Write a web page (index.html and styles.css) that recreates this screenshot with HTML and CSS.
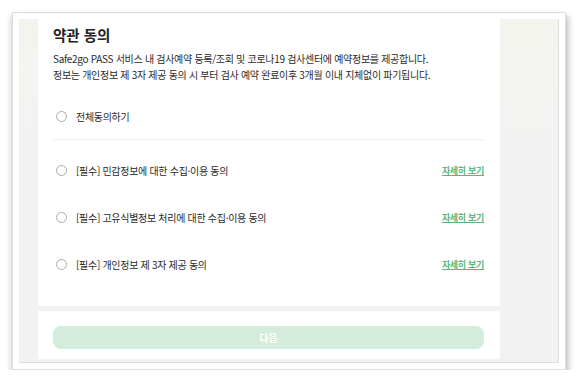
FILE: index.html
```html
<!DOCTYPE html>
<html lang="ko">
<head>
    <meta charset="UTF-8">
    <meta name="viewport" content="width=device-width, initial-scale=1.0">
    <title>약관 동의</title>
    <link rel="stylesheet" href="styles.css">
</head>
<body>
    <div class="frame">
        <div class="shot">
            <div class="side side-left"></div>
            <div class="main">
                <div class="panel">
                    <h1>약관 동의</h1>
                    <p class="desc">Safe2go PASS 서비스 내 검사예약 등록/조회 및 코로나19 검사센터에 예약정보를 제공합니다.<br>정보는 개인정보 제 3자 제공 동의 시 부터 검사 예약 완료이후 3개월 이내 지체없이 파기됩니다.</p>

                    <div class="row row-all">
                        <label class="check"><span class="radio"></span>전체동의하기</label>
                    </div>

                    <div class="row">
                        <label class="check"><span class="radio"></span>[필수] 민감정보에 대한 수집·이용 동의</label>
                        <a href="#" class="more">자세히 보기</a>
                    </div>
                    <div class="row">
                        <label class="check"><span class="radio"></span>[필수] 고유식별정보 처리에 대한 수집·이용 동의</label>
                        <a href="#" class="more">자세히 보기</a>
                    </div>
                    <div class="row">
                        <label class="check"><span class="radio"></span>[필수] 개인정보 제 3자 제공 동의</label>
                        <a href="#" class="more">자세히 보기</a>
                    </div>
                </div>
                <div class="footer">
                    <button class="next" disabled>다음</button>
                </div>
            </div>
            <div class="side side-right"></div>
        </div>
    </div>
</body>
</html>
```

FILE: styles.css
```css
body {
    margin: 0;
    background-color: #fff;
    font-family: "Noto Sans CJK KR", "Noto Sans", sans-serif;
    color: #333;
}
.frame {
    margin: 12px 0 0 12px;
    width: 554px;
    height: 358px;
    box-sizing: border-box;
    padding: 6px;
    background-color: #fff;
    border: 1px solid #dcdcdc;
    box-shadow: 3px 4px 6px rgba(0, 0, 0, 0.22), -2px 3px 5px rgba(0, 0, 0, 0.12);
}
.shot {
    display: flex;
    height: 344px;
    background-color: #f2f2f2;
    border-right: 1px solid #dedede;
    border-bottom: 1px solid #dedede;
    box-sizing: border-box;
}
.side {
    background: linear-gradient(#f4f4ee, #f2f2f2 40%);
}
.side-left {
    width: 19px;
}
.side-right {
    flex: 1;
}
.main {
    width: 462px;
    display: flex;
    flex-direction: column;
}
.panel {
    background-color: #fff;
    height: 287px;
    padding: 0 16px 0 15px;
    box-sizing: border-box;
}
h1 {
    margin: 0;
    padding-top: 6px;
    font-size: 14.5px;
    line-height: 20px;
    font-weight: bold;
    color: #222;
}
.desc {
    margin: 6px 0 0 0;
    font-size: 10px;
    letter-spacing: -0.3px;
    line-height: 16px;
    color: #2a2a2a;
}
.row {
    display: flex;
    justify-content: space-between;
    align-items: center;
    height: 47px;
}
.row-all {
    margin-top: 10px;
    height: 46px;
    border-bottom: 1px solid #f0f0f0;
    margin-bottom: 7px;
}
.check {
    display: flex;
    align-items: center;
    font-size: 10px;
    letter-spacing: -0.3px;
    color: #2a2a2a;
}
.radio {
    width: 9px;
    height: 9px;
    border: 1px solid #aaa;
    border-radius: 50%;
    margin: 0 9px 0 3px;
}
.more {
    font-size: 9px;
    letter-spacing: -0.3px;
    font-weight: bold;
    color: #5cb67a;
}
.footer {
    margin-top: 5px;
    background: #fff;
    height: 48px;
    padding: 12px 16px 0 15px;
    box-sizing: border-box;
}
.next {
    width: 100%;
    height: 23px;
    border: 0;
    border-radius: 8px;
    background-color: #d3ecdb;
    color: #fff;
    font-family: inherit;
    font-size: 10px;
    font-weight: bold;
}
```
